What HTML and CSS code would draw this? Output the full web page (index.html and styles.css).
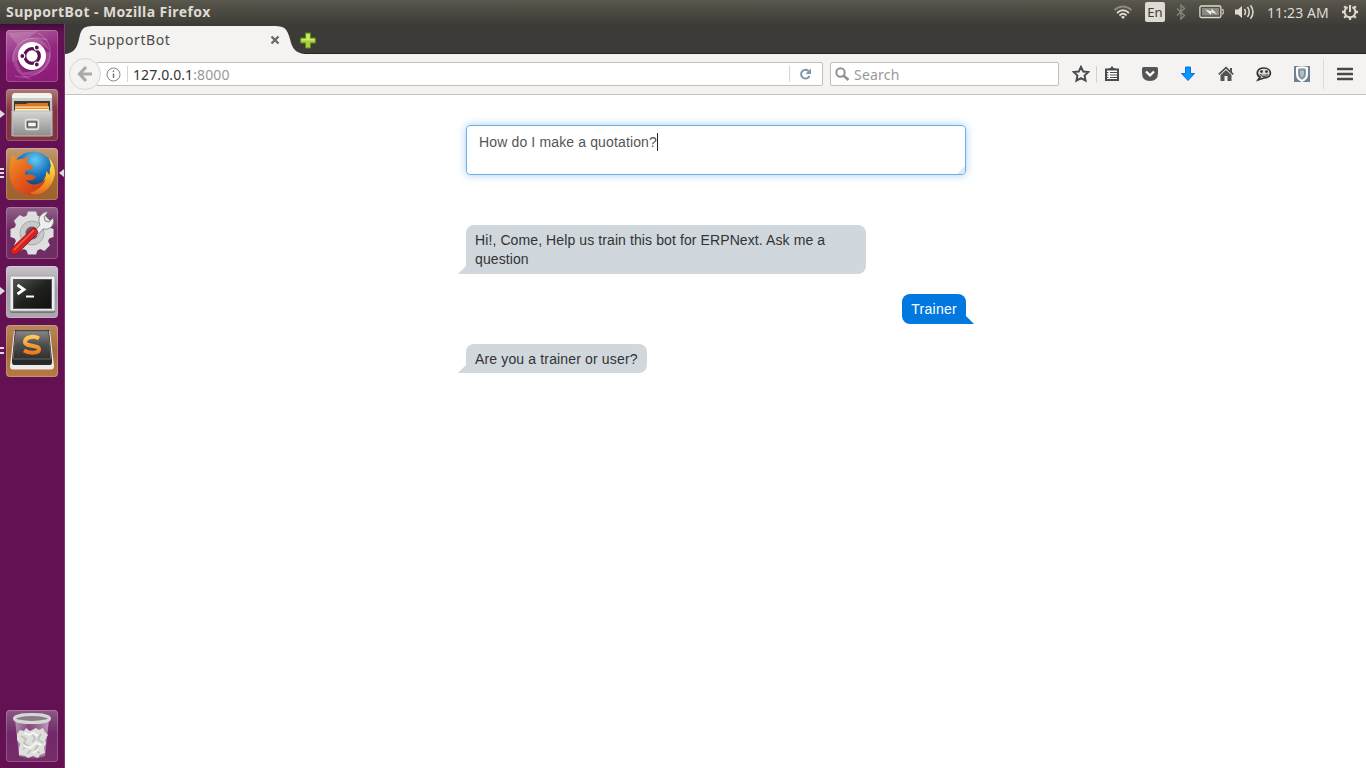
FILE: index.html
```html
<!DOCTYPE html>
<html lang="en">
<head>
<meta charset="utf-8">
<title>SupportBot</title>
<link rel="stylesheet" href="styles.css">
</head>
<body>
<header class="panel">
  <span class="panel-title">SupportBot - Mozilla Firefox</span>
  <div class="indicators">
    <svg class="wifi" width="20" height="16" viewBox="0 0 20 16" fill="none" stroke-width="1.8"><path d="M1.500 6Q10-1 18.500 6" stroke="#8e8b81"/><path d="M4 9Q10 3.500 16 9" stroke="#dfdbd2"/><path d="M6.500 11.500Q10 8 13.500 11.500" stroke="#dfdbd2"/><path d="M8 13Q10 11 12 13L10 15Z" fill="#dfdbd2"/></svg>
    <span class="lang">En</span>
    <svg class="bt" width="10" height="16" viewBox="0 0 10 16" fill="none" stroke="#8b8880" stroke-width="1.3"><path d="M1 4.500L8.500 11.500L5 15V1L8.500 4.500L1 11.500"/></svg>
    <svg class="batt" width="25" height="14" viewBox="0 0 25 14"><rect x=".9" y="1" width="21" height="11.500" rx="1.500" fill="none" stroke="#dfdbd2" stroke-width="1.3"/><path d="M23 4.500h1.200v4.500H23" fill="none" stroke="#dfdbd2"/><rect x="3" y="3" width="17" height="7.500" fill="#8b8981"/><path d="M6 4.500L12.500 6.300V3.500L18 9L12 7.300V10Z" fill="#f0eee8"/></svg>
    <svg class="sound" width="21" height="16" viewBox="0 0 21 16" fill="none" stroke="#dfdbd2" stroke-width="1.5"><path d="M1 5.500h3L8 2v12L4 10.500H1Z" fill="#dfdbd2" stroke="none"/><path d="M10.500 5Q12.500 8 10.500 11M13.500 3Q17 8 13.500 13M16.500 1.200Q21.500 8 16.500 14.800"/></svg>
    <span class="clock">11:23 AM</span>
    <svg class="gear" width="18" height="18" viewBox="-9 -9 18 18" fill="none" stroke="#dfdbd2"><path d="M-2.400-4.900A5.400 5.400 0 1 0 2.400-4.900" stroke-width="2"/><path d="M0-7V0" stroke-width="2"/><path d="M6 0H8M-6 0H-8M0 6V8M4.200 4.200L5.800 5.800M-4.200 4.200L-5.800 5.800M4.200-4.200L5.800-5.800M-4.200-4.200L-5.800-5.800" stroke-width="2.300"/></svg>
  </div>
</header>
<div class="desktop">
  <nav class="launcher">
    <div class="tile dash">
      <svg width="52" height="52" viewBox="0 0 52 52"><g fill="none" stroke="#fff"><path d="M9 46C25 51 46 40 44 20C43 12 39 7 32 3" stroke-opacity=".25"/><path d="M7 32C5 15 21 3 41 10" stroke-opacity=".3"/></g><path d="M7 30C7 6 38-1 44 22C32 6 14 12 11 32Q14 43 26 50Q9 46 7 30ZM44 22C48 39 29 51 12 42C30 44 37 37 39 22ZM2 3L32 1L12 16Z" fill="#fff" opacity=".17"/><circle cx="26" cy="27" r="14" fill="#45063c" opacity=".35"/><circle cx="26" cy="26" r="14" fill="#fff"/><circle cx="26" cy="26" r="7.300" fill="none" stroke="#5c1050" stroke-width="3.200"/><g stroke="#fff" stroke-width="1.200" fill="#5c1050"><circle cx="16.300" cy="26" r="2.500"/><circle cx="30.800" cy="17.500" r="2.500"/><circle cx="30.800" cy="34.500" r="2.500"/></g></svg>
    </div>
    <div class="tile files">
      <svg width="52" height="52" viewBox="0 0 52 52"><defs><linearGradient id="cab" x2="0" y2="1"><stop stop-color="#d5d5d3"/><stop offset="1" stop-color="#8d8d8b"/></linearGradient></defs><path d="M9 4H43Q46 4 46 8L47 47H5L6 8Q6 4 9 4Z" fill="url(#cab)"/><path d="M9 4H43Q46 4 46 8V9H6Q6 4 9 4Z" fill="#f2f2f0"/><path d="M8 12H44V24H8Z" fill="#393936"/><path d="M9 15H20L22 14H42V24H9Z" fill="#df761d"/><path d="M9 17.500H43V23H9Z" fill="#fff0d4"/><path d="M9 18.500H43V20H9Z" fill="#e89232"/><path d="M6 22H46L45 47H7Z" fill="url(#cab)" stroke="#b9b9b6"/><rect x="19.500" y="30.500" width="13" height="10" rx="2" fill="#aaa" stroke="#e5e5e3" stroke-width="1.500"/><rect x="21.500" y="33" width="9" height="5" fill="#f4f4f2" stroke="#555" stroke-width="1.300"/></svg>
      <i class="run-one"></i>
    </div>
    <div class="tile firefox">
      <svg width="52" height="52" viewBox="0 0 52 52"><defs><radialGradient id="glb" cx=".55" cy=".2" r=".75"><stop stop-color="#68c9f1"/><stop offset=".5" stop-color="#1974bd"/><stop offset="1" stop-color="#082b63"/></radialGradient><linearGradient id="fox" x2="1" y2="1"><stop stop-color="#f39827"/><stop offset=".45" stop-color="#e45a1c"/><stop offset="1" stop-color="#b92b15"/></linearGradient><linearGradient id="flame" x2="0" y2="1"><stop stop-color="#fff05b"/><stop offset=".5" stop-color="#fbb829"/><stop offset="1" stop-color="#e9631d"/></linearGradient></defs><circle cx="27" cy="24" r="20.500" fill="url(#glb)"/><path d="M6 7Q9 8 11 12Q15 10 18 11Q20 8 24 7Q20 11 21 15L28 19Q25 22 20 23Q18 25 20 27Q26 25 30 29Q26 34 20 32Q25 39 34 35Q42 32 45 22Q49 26 45 35Q38 49 23 47Q7 45 4 30Q2 17 6 7Z" fill="url(#fox)"/><path d="M43 10Q49 17 49 26Q47 39 36 45Q29 48 24 45Q36 41 40 31L37 33Q41 27 40 23L44 27Q43 21 45 18Q44 13 43 10Z" fill="url(#flame)"/></svg>
      <i class="run-many"></i><i class="active-mark"></i>
    </div>
    <div class="tile settings">
      <svg width="52" height="52" viewBox="-26 -26 52 52"><g fill="#dedede"><circle r="18"/><g id="tooth"><path d="M-4-21.500H4L6-16H-6ZM-4 21.500H4L6 16H-6Z"/></g><use href="#tooth" transform="rotate(45)"/><use href="#tooth" transform="rotate(90)"/><use href="#tooth" transform="rotate(135)"/></g><circle r="12" fill="#c8c8c8" stroke="#aaa"/><circle r="6.500" fill="#765070"/><path d="M2-1L8-8Q5-15 10-19Q13-22 16-21L12-16L13-12L17-11L21-15Q23-9 18-5Q15-3 11-4L5 3Z" fill="#eee" stroke="#777" stroke-width=".8"/><path d="M-20 15L1-5Q5-5 6 0L-14 20Q-18 23-21 20Q-22 17-20 15Z" fill="#d5221f" stroke="#8c1215" stroke-width=".8"/><path d="M-18 17L2-3" stroke="#f45c50" stroke-width="1.700"/></svg>
    </div>
    <div class="tile terminal">
      <svg width="52" height="52" viewBox="0 0 52 52"><defs><linearGradient id="trm" x2="1" y2="1"><stop stop-color="#515350"/><stop offset=".5" stop-color="#20221f"/><stop offset="1" stop-color="#111"/></linearGradient></defs><rect x="4" y="11" width="45" height="36" rx="2" fill="#777"/><rect x="4" y="10" width="45" height="35" rx="1.500" fill="#eee" stroke="#a4a4a4"/><rect x="7.500" y="13.500" width="38" height="29" fill="url(#trm)" stroke="#555"/><path d="M11.500 19L18 23.500L11.500 28" fill="none" stroke="#fff" stroke-width="2.800"/><path d="M20 30.500H28" stroke="#fff" stroke-width="2"/></svg>
      <i class="run-one"></i>
    </div>
    <div class="tile sublime">
      <svg width="52" height="52" viewBox="0 0 52 52"><defs><linearGradient id="key" x2="0" y2="1"><stop stop-color="#888"/><stop offset=".5" stop-color="#4c4c4c"/><stop offset="1" stop-color="#303030"/></linearGradient><linearGradient id="ess" x2="0" y2="1"><stop stop-color="#ffc65b"/><stop offset="1" stop-color="#f17b19"/></linearGradient></defs><path d="M8 6H44L48 41Q48 44.500 45 44.500H7Q4 44.500 4 41Z" fill="#eeece8"/><path d="M9 5H43L46 35V37Q46 40 44 40H8Q6 40 6 37V35Z" fill="#292929"/><path d="M10 6H42L45 34H7Z" fill="url(#key)" stroke="#666"/><path d="M33 13.500C27 10 19 12.500 19 17C19 22 33 19.500 33 24.500C33 28.500 23 28.500 18 25.500" fill="none" stroke="url(#ess)" stroke-width="4"/></svg>
      <i class="run-two"></i>
    </div>
    <div class="tile trash">
      <svg width="52" height="52" viewBox="0 0 52 52"><defs><linearGradient id="bin"><stop stop-color="#ddd" stop-opacity=".55"/><stop offset=".4" stop-color="#ddd" stop-opacity=".12"/><stop offset="1" stop-color="#fff" stop-opacity=".5"/></linearGradient></defs><path d="M9 9H43L39 46Q26 51 13 46Z" fill="url(#bin)"/><path d="M11 24L14 20L18 21L20 18L24 21L30 18L33 20L37 18L39 22L42 25L39 30L40 34L38 37L39 43L34 45L32 48L27 46L22 48L19 46L13 45L13 38L14 34L11 30Z" fill="#dededb"/><path d="M15 26L20 29L18 33L22 36L17 39M26 23L29 29L26 32M35 24L32 29L37 33M32 35L29 40L34 43M25 40L21 44" fill="none" stroke="#aaa" stroke-opacity=".65" stroke-width="1.600"/><path d="M18 23L23 25L27 23L32 26M18 36L24 38L30 33L36 35M27 43L32 40" fill="none" stroke="#f4f4f2" stroke-width="2"/><ellipse cx="26" cy="8.500" rx="17.500" ry="4" fill="#8b7b89" stroke="#d7d7d5" stroke-width="3"/></svg>
    </div>
  </nav>
  <main class="browser">
    <div class="tabs">
      <div class="tab">
        <svg class="tab-shape" width="241" height="30" viewBox="0 0 241 30"><path d="M0 30C9 29 12 24 14 15C16 5 18 2 28 2H210C220 2 222 5 225 15C227 24 230 29 240 30Z" fill="#f4f3f1"/></svg>
        <span class="tab-label">SupportBot</span>
        <svg class="tab-close" width="10" height="10" viewBox="0 0 10 10"><path d="M1.500 1.500L8.500 8.500M8.500 1.500L1.500 8.500" stroke="#666663" stroke-width="2.200"/></svg>
      </div>
      <svg class="new-tab" width="17" height="17" viewBox="0 0 17 17"><path d="M5.500 1H10.500V6H15.500V11H10.500V16H5.500V11H.5V6H5.500Z" fill="#a8cf38" stroke="#598d1b"/><path d="M6.500 7V2H9.500V7H14.500V8.500H1.500V7Z" fill="#cfe86d"/></svg>
    </div>
    <div class="toolbar">
      <div class="back"><svg width="18" height="18" viewBox="0 0 18 18" fill="none" stroke="#aaa" stroke-width="3.200"><path d="M10 2L3.500 9L10 16M4 9H16"/></svg></div>
      <div class="url">
        <svg class="info" width="15" height="15" viewBox="0 0 15 15"><circle cx="7.500" cy="7.500" r="6.500" fill="none" stroke="#858585"/><path d="M7.500 6.500V11M7.500 3.500V5" stroke="#777" stroke-width="1.500"/></svg>
        <div class="address"><span class="url-text">127.0.0.1<span class="port">:8000</span></span></div>
        <div class="reload"><svg width="13" height="13" viewBox="0 0 13 13"><path d="M9.500 3A4.400 4.400 0 1 0 10.500 8" fill="none" stroke="#8496a6" stroke-width="2"/><path d="M12 .5V6H6.500Z" fill="#8496a6"/></svg></div>
      </div>
      <div class="search"><svg width="15" height="15" viewBox="0 0 15 15" fill="none" stroke="#919191"><circle cx="5.500" cy="5.500" r="4.200" stroke-width="2"/><path d="M8.500 8.500L13.500 13" stroke-width="2.500"/></svg><span class="search-text">Search</span></div>
      <div class="tool star"><svg width="18" height="18" viewBox="0 0 18 18"><path d="M9 1.800L11.200 6.500L16.300 7L12.500 10.500L13.600 15.700L9 13.100L4.400 15.700L5.500 10.500L1.700 7L6.800 6.500Z" fill="none" stroke="#4a4a4a" stroke-width="1.900"/></svg></div>
      <i class="separator"></i>
      <div class="tool list"><svg width="16" height="16" viewBox="0 0 16 16"><path d="M2 3.500H14V14H2Z" fill="#fff" stroke="#4a4a4a" stroke-width="2"/><path d="M4 4V2.500H6L8 0L10 2.500H12V4Z" fill="#4a4a4a"/><path d="M3 6.500H4.500M6 6.500H13M3 9H4.500M6 9H13M3 11.500H4.500M6 11.500H13" stroke="#4a4a4a" stroke-width="1.100"/></svg></div>
      <div class="tool"><svg width="16" height="16" viewBox="0 0 16 16"><path d="M1.500 1H14.500Q16 1 16 2.500V7Q16 15 8 15Q0 15 0 7V2.500Q0 1 1.500 1Z" fill="#555"/><path d="M4 5.500L8 9.300L12 5.500" fill="none" stroke="#fff" stroke-width="2.300"/></svg></div>
      <div class="tool"><svg width="14" height="16" viewBox="0 0 14 16"><path d="M4.500 1H9.500V7.500H13.500L7 14.500L.5 7.500H4.500Z" fill="#0996f8" stroke="#0670e4"/></svg></div>
      <div class="tool"><svg width="16" height="16" viewBox="0 0 16 16"><path d="M.8 8.300L8 1.700L15.200 8.300" fill="none" stroke="#4c4c4c" stroke-width="1.700"/><path d="M12 2H14V7L12 5ZM2.500 9L8 4L13.500 9V15H9.500V10H6.500V15H2.500Z" fill="#555"/></svg></div>
      <div class="tool"><svg width="16" height="16" viewBox="0 0 16 16"><path d="M4 11L2 14L8 12C17 12 16 2 8 2C0 2 0 9 4 11Z" fill="#ddd" stroke="#333" stroke-width="1.700"/><circle cx="5.500" cy="5.600" r="1.400" fill="#333"/><circle cx="10.500" cy="5.600" r="1.400" fill="#333"/><path d="M3.500 8Q8 9 12.500 8Q11 11 8 11Q5 11 3.500 8Z" fill="#333"/><path d="M5.500 9.200H10.500" stroke="#fff" stroke-width=".8"/></svg></div>
      <div class="tool"><svg width="16" height="16" viewBox="0 0 16 16"><rect width="16" height="16" fill="#71818f"/><path d="M3 2Q8 .5 13 2V8Q13 13 8 15Q3 13 3 8Z" fill="#93a1ac" stroke="#fff" stroke-width="2"/><path d="M5.500 4H10.500V8Q10 11 8 12Q6 11 5.500 8Z" fill="#b5bfc7" stroke="#687987" stroke-width=".7"/></svg></div>
      <div class="tool menu"><svg width="16" height="14" viewBox="0 0 16 14"><path d="M1 2H15M1 7H15M1 12H15" stroke="#484848" stroke-width="2.600" stroke-linecap="round"/></svg></div>
    </div>
    <section class="page">
      <div class="chat">
        <div class="composer"><span class="typed">How do I make a quotation?</span><span class="caret"></span><svg class="grip" width="8" height="8" viewBox="0 0 8 8"><path d="M8 0V6L6 8H0Z" fill="#e6e6e6"/></svg></div>
        <div class="bubble bot wide">Hi!, Come, Help us train this bot for ERPNext. Ask me a question</div>
        <div class="bubble user">Trainer</div>
        <div class="bubble bot short">Are you a trainer or user?</div>
      </div>
    </section>
  </main>
</div>
</body>
</html>
```
FILE: styles.css
```css
* { box-sizing: border-box; }
body { margin: 0; width: 1366px; height: 768px; overflow: hidden; display: flex; flex-direction: column; font-family: "Noto Sans", "Open Sans", sans-serif; }
svg { display: block; flex: none; }
.panel { height: 24px; flex: none; display: flex; align-items: center; justify-content: space-between; padding: 0 7px 0 6px; color: #dfdbd2; background: linear-gradient(#5c5a4f, #57544a 8%, #3e3d38); }
.panel-title { font-size: 14px; font-weight: 700; line-height: 24px; letter-spacing: .42px; white-space: nowrap; }
.indicators { display: flex; align-items: center; height: 24px; }
.lang { margin-left: 12px; width: 20px; height: 20px; border-radius: 2px; background: #dfdbd2; color: #3e3d38; font-size: 13px; line-height: 20px; text-align: center; }
.bt { margin-left: 11px; }
.batt { margin-left: 13px; }
.sound { margin-left: 10px; }
.clock { margin-left: 12px; width: 63px; font-size: 14px; letter-spacing: .1px; white-space: nowrap; }
.gear { margin-left: 11px; }
.desktop { flex: 1; min-height: 0; display: flex; }
.launcher { width: 65px; padding: 6px 7px 6px 6px; display: flex; flex-direction: column; gap: 7px; background: linear-gradient(#400c38, #641054 9px, #641153); border-right: 1px solid #7c3a70; }
.tile { position: relative; width: 52px; height: 52px; flex: none; border-radius: 4px; box-shadow: inset 0 0 0 1px rgba(255,255,255,.2); }
.dash { background: linear-gradient(160deg, #b46aa2, #93247f 50%, #8c1a77); }
.files { background: linear-gradient(#ad7b75, #843440 40%, #833340); }
.firefox { background: linear-gradient(#c49b73, #a56939 55%, #9e602d); }
.settings { background: linear-gradient(#91638a, #6d2c62 45%, #702d65); }
.terminal { background: linear-gradient(#c9c1cb, #a299a3 50%, #aea5af); }
.sublime { background: linear-gradient(#bb865b, #a86b3b 50%, #b77945); }
.trash { margin-top: auto; background: linear-gradient(#8e5885, #70286a 45%, #762d69); }
.run-one { position: absolute; left: -6px; top: 21px; border: 4px solid transparent; border-left: 5px solid #dedbe0; border-right: 0; }
.run-many { position: absolute; left: -6px; top: 20px; width: 4px; height: 11px; background: repeating-linear-gradient(#dedbe0 0 2px, transparent 2px 4px); }
.run-two { position: absolute; left: -6px; top: 22px; width: 4px; height: 7px; border: solid #dedbe0; border-width: 2px 0; }
.active-mark { position: absolute; right: -6px; top: 21px; border: 4px solid transparent; border-right: 5px solid #dedbe0; border-left: 0; }
.browser { flex: 1; min-width: 0; display: flex; flex-direction: column; background: #fff; }
.tabs { height: 30px; flex: none; display: flex; background: #3c3b37; box-shadow: inset 0 -1px #252522; }
.tab { position: relative; width: 235px; height: 30px; }
.tab-shape { position: absolute; left: 0; top: 0; }
.tab-label { position: absolute; left: 24px; top: 6px; font-size: 14px; line-height: 20px; letter-spacing: .6px; color: #4c4c4c; }
.tab-close { position: absolute; left: 205px; top: 11px; }
.new-tab { margin-top: 8px; }
.toolbar { height: 41px; flex: none; display: flex; align-items: center; padding-left: 4px; background: #f4f3f1; border-bottom: 1px solid #c6c2bd; }
.back { position: relative; z-index: 1; width: 32px; height: 32px; flex: none; border: 1px solid #d9d7d4; border-radius: 50%; background: #f4f3f1; display: flex; align-items: center; justify-content: center; }
.url { width: 727px; height: 24px; margin-left: -5px; padding-left: 9px; display: flex; align-items: center; border: 1px solid #c1beba; border-radius: 2px; background: #fff; font-size: 14px; color: #333; }
.info { width: 15px; }
.address { height: 16px; margin-left: 6px; padding-left: 5px; border-left: 1px solid #d4d4d4; line-height: 18px; letter-spacing: .1px; }
.port { color: #999; }
.reload { margin-left: auto; width: 33px; height: 16px; padding-left: 9px; display: flex; align-items: center; border-left: 1px solid #d4d4d4; }
.search { width: 229px; height: 24px; margin-left: 7px; padding-left: 4px; display: flex; align-items: center; gap: 4px; border: 1px solid #c1beba; border-radius: 2px; background: #fff; font-size: 14px; line-height: 20px; color: #999; }
.search-text { padding-top: 2px; letter-spacing: .2px; }
.tool { width: 38px; height: 30px; display: flex; align-items: center; justify-content: center; }
.star { width: 26px; margin-left: 9px; margin-right: 2px; }
.separator { width: 1px; height: 17px; background: #d4d2cf; }
.list { width: 34px; padding-right: 4px; }
.menu { width: 43px; margin-left: 2px; border-left: 1px solid #dddbd8; }
.page { flex: 1; padding: 30px 400px 0 401px; }
.chat { width: 500px; display: flex; flex-direction: column; font-family: "Liberation Sans", Arial, sans-serif; font-size: 14px; line-height: 19px; letter-spacing: .1px; color: #333; }
.composer { position: relative; height: 50px; margin-bottom: 50px; padding: 7px 12px; display: flex; border: 1px solid #66afe9; border-radius: 4px; box-shadow: 0 0 8px rgba(102,175,233,.6); color: #555; letter-spacing: .14px; }
.caret { width: 1px; height: 18px; background: #222; }
.grip { position: absolute; right: 0; bottom: 0; }
.bubble { position: relative; align-self: flex-start; margin-bottom: 20px; padding: 6px 9px 5px; border-radius: 8px; white-space: nowrap; }
.bot { background: #d0d7dd; border-bottom-left-radius: 0; padding-bottom: 4px; }
.short { letter-spacing: .15px; }
.wide { width: 400px; white-space: normal; padding-bottom: 5px; }
.user { align-self: flex-end; background: #0078df; color: #fff; letter-spacing: .28px; }
.bubble::after { content: ""; position: absolute; bottom: 0; border-top: 8px solid transparent; }
.bot::after { left: -8px; border-right: 8px solid #d0d7dd; }
.user { border-bottom-right-radius: 0; }
.user::after { right: -8px; border-left: 8px solid #0078df; }
```
